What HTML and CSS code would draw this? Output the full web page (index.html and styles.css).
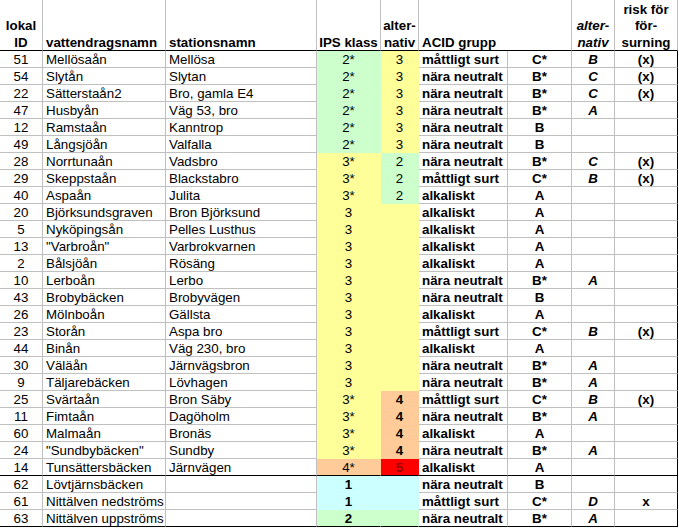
FILE: index.html
```html
<!DOCTYPE html>
<html lang="sv">
<head>
<meta charset="utf-8">
<title>Vattendrag</title>
<link rel="stylesheet" href="styles.css">
</head>
<body>
<div class="sheet">
  <div class="row head">
    <div class="cell hc ctr"><div class="ht">lokal<br>ID</div></div>
    <div class="cell hc"><div class="ht">vattendragsnamn</div></div>
    <div class="cell hc"><div class="ht">stationsnamn</div></div>
    <div class="cell hc ctr"><div class="ht">IPS klass</div></div>
    <div class="cell hc ctr"><div class="ht">alter-<br>nativ</div></div>
    <div class="cell hc span2"><div class="ht">ACID grupp</div></div>
    <div class="cell hc ctr"><div class="ht"><i>alter-<br>nativ</i></div></div>
    <div class="cell hc ctr"><div class="ht">risk för<br>för-<br>surning</div></div>
  </div>

  <div class="row"><div class="cell ctr">51</div><div class="cell">Mellösaån</div><div class="cell">Mellösa</div><div class="cell ctr g">2*</div><div class="cell ctr y">3</div><div class="cell b">måttligt surt</div><div class="cell ctr b">C*</div><div class="cell ctr b it">B</div><div class="cell ctr b last">(x)</div></div>
  <div class="row"><div class="cell ctr">54</div><div class="cell">Slytån</div><div class="cell">Slytan</div><div class="cell ctr g">2*</div><div class="cell ctr y">3</div><div class="cell b">nära neutralt</div><div class="cell ctr b">B*</div><div class="cell ctr b it">C</div><div class="cell ctr b last">(x)</div></div>
  <div class="row"><div class="cell ctr">22</div><div class="cell">Sätterstaån2</div><div class="cell">Bro, gamla E4</div><div class="cell ctr g">2*</div><div class="cell ctr y">3</div><div class="cell b">nära neutralt</div><div class="cell ctr b">B*</div><div class="cell ctr b it">C</div><div class="cell ctr b last">(x)</div></div>
  <div class="row"><div class="cell ctr">47</div><div class="cell">Husbyån</div><div class="cell">Väg 53, bro</div><div class="cell ctr g">2*</div><div class="cell ctr y">3</div><div class="cell b">nära neutralt</div><div class="cell ctr b">B*</div><div class="cell ctr b it">A</div><div class="cell ctr b last"></div></div>
  <div class="row"><div class="cell ctr">12</div><div class="cell">Ramstaån</div><div class="cell">Kanntrop</div><div class="cell ctr g">2*</div><div class="cell ctr y">3</div><div class="cell b">nära neutralt</div><div class="cell ctr b">B</div><div class="cell ctr b it"></div><div class="cell ctr b last"></div></div>
  <div class="row"><div class="cell ctr">49</div><div class="cell">Långsjöån</div><div class="cell">Valfalla</div><div class="cell ctr g">2*</div><div class="cell ctr y">3</div><div class="cell b">nära neutralt</div><div class="cell ctr b">B</div><div class="cell ctr b it"></div><div class="cell ctr b last"></div></div>
  <div class="row"><div class="cell ctr">28</div><div class="cell">Norrtunaån</div><div class="cell">Vadsbro</div><div class="cell ctr y">3*</div><div class="cell ctr g">2</div><div class="cell b">nära neutralt</div><div class="cell ctr b">B*</div><div class="cell ctr b it">C</div><div class="cell ctr b last">(x)</div></div>
  <div class="row"><div class="cell ctr">29</div><div class="cell">Skeppstaån</div><div class="cell">Blackstabro</div><div class="cell ctr y">3*</div><div class="cell ctr g">2</div><div class="cell b">måttligt surt</div><div class="cell ctr b">C*</div><div class="cell ctr b it">B</div><div class="cell ctr b last">(x)</div></div>
  <div class="row"><div class="cell ctr">40</div><div class="cell">Aspaån</div><div class="cell">Julita</div><div class="cell ctr y">3*</div><div class="cell ctr g">2</div><div class="cell b">alkaliskt</div><div class="cell ctr b">A</div><div class="cell ctr b it"></div><div class="cell ctr b last"></div></div>
  <div class="row"><div class="cell ctr">20</div><div class="cell">Björksundsgraven</div><div class="cell">Bron Björksund</div><div class="cell ctr y">3</div><div class="cell ctr y"></div><div class="cell b">alkaliskt</div><div class="cell ctr b">A</div><div class="cell ctr b it"></div><div class="cell ctr b last"></div></div>
  <div class="row"><div class="cell ctr">5</div><div class="cell">Nyköpingsån</div><div class="cell">Pelles Lusthus</div><div class="cell ctr y">3</div><div class="cell ctr y"></div><div class="cell b">alkaliskt</div><div class="cell ctr b">A</div><div class="cell ctr b it"></div><div class="cell ctr b last"></div></div>
  <div class="row"><div class="cell ctr">13</div><div class="cell">"Varbroån"</div><div class="cell">Varbrokvarnen</div><div class="cell ctr y">3</div><div class="cell ctr y"></div><div class="cell b">alkaliskt</div><div class="cell ctr b">A</div><div class="cell ctr b it"></div><div class="cell ctr b last"></div></div>
  <div class="row"><div class="cell ctr">2</div><div class="cell">Bålsjöån</div><div class="cell">Rösäng</div><div class="cell ctr y">3</div><div class="cell ctr y"></div><div class="cell b">alkaliskt</div><div class="cell ctr b">A</div><div class="cell ctr b it"></div><div class="cell ctr b last"></div></div>
  <div class="row"><div class="cell ctr">10</div><div class="cell">Lerboån</div><div class="cell">Lerbo</div><div class="cell ctr y">3</div><div class="cell ctr y"></div><div class="cell b">nära neutralt</div><div class="cell ctr b">B*</div><div class="cell ctr b it">A</div><div class="cell ctr b last"></div></div>
  <div class="row"><div class="cell ctr">43</div><div class="cell">Brobybäcken</div><div class="cell">Brobyvägen</div><div class="cell ctr y">3</div><div class="cell ctr y"></div><div class="cell b">nära neutralt</div><div class="cell ctr b">B</div><div class="cell ctr b it"></div><div class="cell ctr b last"></div></div>
  <div class="row"><div class="cell ctr">26</div><div class="cell">Mölnboån</div><div class="cell">Gällsta</div><div class="cell ctr y">3</div><div class="cell ctr y"></div><div class="cell b">alkaliskt</div><div class="cell ctr b">A</div><div class="cell ctr b it"></div><div class="cell ctr b last"></div></div>
  <div class="row"><div class="cell ctr">23</div><div class="cell">Storån</div><div class="cell">Aspa bro</div><div class="cell ctr y">3</div><div class="cell ctr y"></div><div class="cell b">måttligt surt</div><div class="cell ctr b">C*</div><div class="cell ctr b it">B</div><div class="cell ctr b last">(x)</div></div>
  <div class="row"><div class="cell ctr">44</div><div class="cell">Binån</div><div class="cell">Väg 230, bro</div><div class="cell ctr y">3</div><div class="cell ctr y"></div><div class="cell b">alkaliskt</div><div class="cell ctr b">A</div><div class="cell ctr b it"></div><div class="cell ctr b last"></div></div>
  <div class="row"><div class="cell ctr">30</div><div class="cell">Väläån</div><div class="cell">Järnvägsbron</div><div class="cell ctr y">3</div><div class="cell ctr y"></div><div class="cell b">nära neutralt</div><div class="cell ctr b">B*</div><div class="cell ctr b it">A</div><div class="cell ctr b last"></div></div>
  <div class="row"><div class="cell ctr">9</div><div class="cell">Täljarebäcken</div><div class="cell">Lövhagen</div><div class="cell ctr y">3</div><div class="cell ctr y"></div><div class="cell b">nära neutralt</div><div class="cell ctr b">B*</div><div class="cell ctr b it">A</div><div class="cell ctr b last"></div></div>
  <div class="row"><div class="cell ctr">25</div><div class="cell">Svärtaån</div><div class="cell">Bron Säby</div><div class="cell ctr y">3*</div><div class="cell ctr o b">4</div><div class="cell b">måttligt surt</div><div class="cell ctr b">C*</div><div class="cell ctr b it">B</div><div class="cell ctr b last">(x)</div></div>
  <div class="row"><div class="cell ctr">11</div><div class="cell">Fimtaån</div><div class="cell">Dagöholm</div><div class="cell ctr y">3*</div><div class="cell ctr o b">4</div><div class="cell b">nära neutralt</div><div class="cell ctr b">B*</div><div class="cell ctr b it">A</div><div class="cell ctr b last"></div></div>
  <div class="row"><div class="cell ctr">60</div><div class="cell">Malmaån</div><div class="cell">Bronäs</div><div class="cell ctr y">3*</div><div class="cell ctr o b">4</div><div class="cell b">alkaliskt</div><div class="cell ctr b">A</div><div class="cell ctr b it"></div><div class="cell ctr b last"></div></div>
  <div class="row"><div class="cell ctr">24</div><div class="cell">"Sundbybäcken"</div><div class="cell">Sundby</div><div class="cell ctr y">3*</div><div class="cell ctr o b">4</div><div class="cell b">nära neutralt</div><div class="cell ctr b">B*</div><div class="cell ctr b it">A</div><div class="cell ctr b last"></div></div>
  <div class="row sep"><div class="cell ctr">14</div><div class="cell">Tunsättersbäcken</div><div class="cell">Järnvägen</div><div class="cell ctr o">4*</div><div class="cell ctr r b">5</div><div class="cell b">alkaliskt</div><div class="cell ctr b">A</div><div class="cell ctr b it"></div><div class="cell ctr b last"></div></div>
  <div class="row"><div class="cell ctr">62</div><div class="cell">Lövtjärnsbäcken</div><div class="cell"></div><div class="cell ctr t b">1</div><div class="cell ctr t"></div><div class="cell b">nära neutralt</div><div class="cell ctr b">B</div><div class="cell ctr b it"></div><div class="cell ctr b last"></div></div>
  <div class="row"><div class="cell ctr">61</div><div class="cell">Nittälven nedströms</div><div class="cell"></div><div class="cell ctr t b">1</div><div class="cell ctr t"></div><div class="cell b">måttligt surt</div><div class="cell ctr b">C*</div><div class="cell ctr b it">D</div><div class="cell ctr b last">x</div></div>
  <div class="row sep"><div class="cell ctr">63</div><div class="cell">Nittälven uppströms</div><div class="cell"></div><div class="cell ctr g b">2</div><div class="cell ctr g"></div><div class="cell b">nära neutralt</div><div class="cell ctr b">B*</div><div class="cell ctr b it">A</div><div class="cell ctr b last"></div></div>
</div>
</body>
</html>
```

FILE: styles.css
```css
html, body {
  margin: 0;
  padding: 0;
  background: #ffffff;
}

body {
  font-family: "Liberation Sans", Arial, sans-serif;
  font-size: 13.33px;
  color: #000000;
}

.sheet {
  display: grid;
  grid-template-columns: 43px 123px 151px 64px 38px 89px 64px 43px 63px;
  grid-template-rows: 51px;
  grid-auto-rows: 17px;
  width: 678px;
}

.row {
  display: contents;
}

.cell {
  box-sizing: border-box;
  height: 17px;
  padding: 2px 3px 0;
  line-height: 14px;
  white-space: nowrap;
  overflow: hidden;
  border-right: 1px solid #c0c0c0;
  border-bottom: 1px solid #c0c0c0;
}

.ctr {
  text-align: center;
}

.b {
  font-weight: bold;
}

.it {
  font-style: italic;
}

/* fills hide the gridlines, as in the spreadsheet */
.g { background: #ccffcc; border-color: transparent; }
.y { background: #ffff99; border-color: transparent; }
.o { background: #ffcc99; border-color: transparent; }
.r { background: #ff0000; border-color: transparent; color: #9a0000; }
.t { background: #ccffff; border-color: transparent; }

.last {
  border-right-color: #000000;
}

.row.sep > .cell {
  border-bottom-color: #000000;
}

/* header */
.head > .cell {
  height: 51px;
  padding: 0 3px;
  font-weight: bold;
  line-height: 16.5px;
  display: flex;
  align-items: flex-end;
  border-bottom-color: #000000;
  overflow: visible;
}

.head > .ctr {
  justify-content: center;
}

.ht {
  margin-bottom: -1px;
}

.span2 {
  grid-column: span 2;
}
```
